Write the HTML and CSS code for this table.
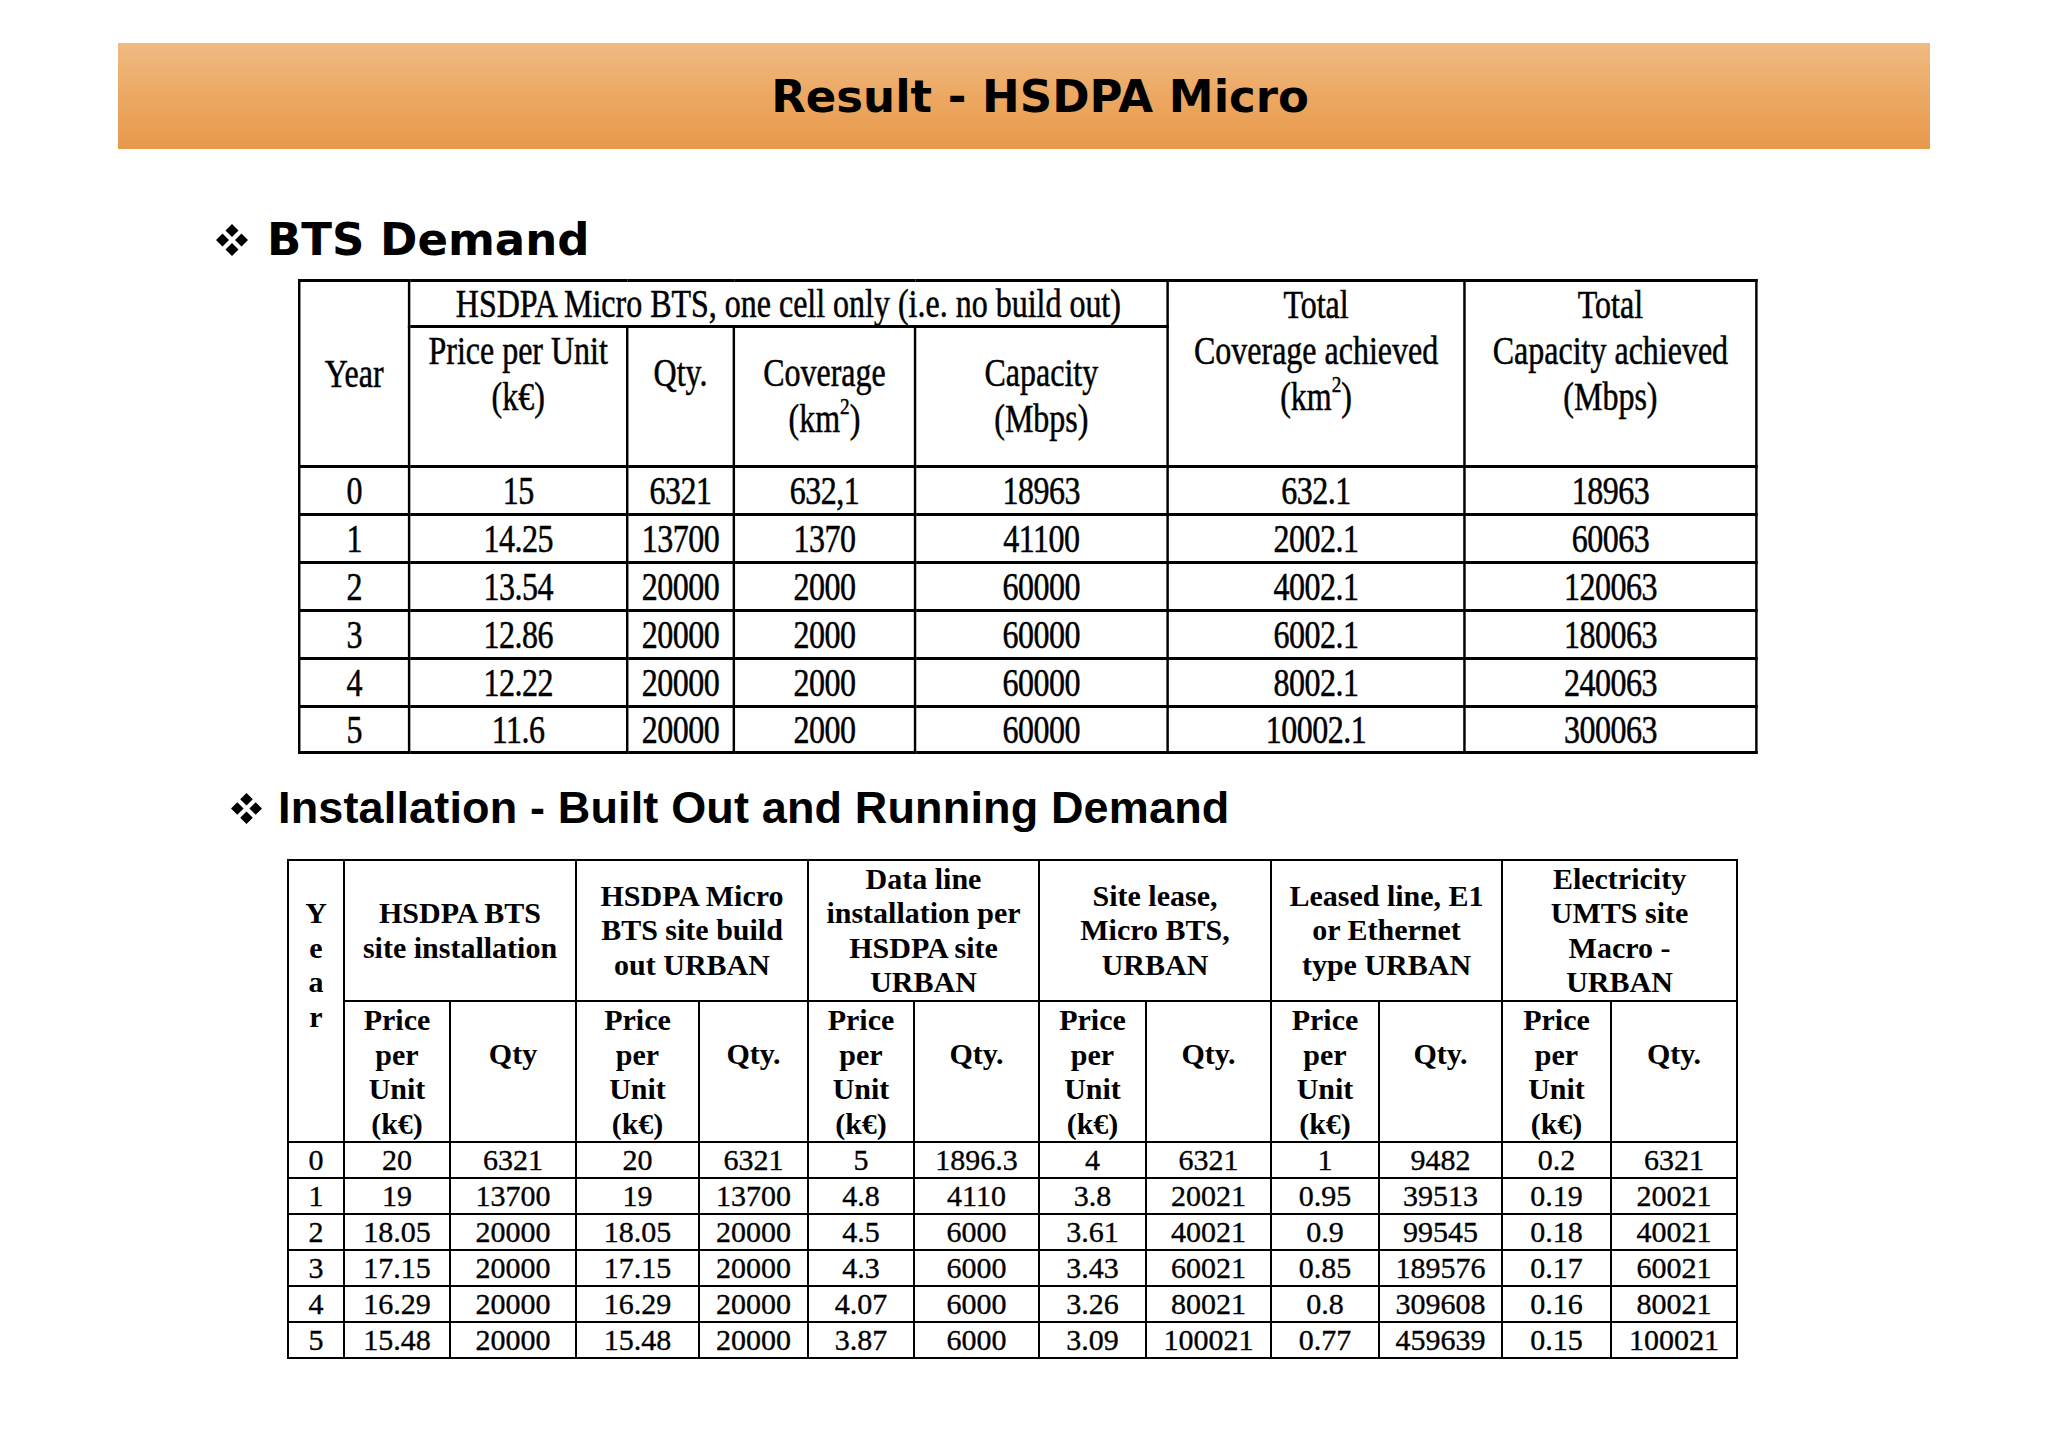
FILE: index.html
```html
<!DOCTYPE html>
<html lang="en">
<head>
<meta charset="utf-8">
<title>Result - HSDPA Micro</title>
<link rel="stylesheet" href="styles.css">
</head>
<body>
<header class="banner">
  <h1 class="banner-title">Result - HSDPA Micro</h1>
</header>

<h2 class="heading heading-bts">
  <svg class="bullet" viewBox="0 0 32 32" aria-hidden="true"><path d="M16 0L22.5 6.5L16 13L9.5 6.5Z M6.5 9.5L13 16L6.5 22.5L0 16Z M25.5 9.5L32 16L25.5 22.5L19 16Z M16 19L22.5 25.5L16 32L9.5 25.5Z"/></svg>
  <span>BTS Demand</span>
</h2>

<table class="bts">
  <colgroup>
    <col class="b-year"><col class="b-price"><col class="b-qty"><col class="b-cov"><col class="b-cap"><col class="b-tcov"><col class="b-tcap">
  </colgroup>
  <tr class="r-group">
    <td rowspan="2" class="mid">Year</td>
    <td colspan="4" class="mid tight">HSDPA Micro BTS, one cell only (i.e. no build out)</td>
    <td rowspan="2" class="top">Total<br>Coverage achieved<br>(km<sup>2</sup>)</td>
    <td rowspan="2" class="top">Total<br>Capacity achieved<br>(Mbps)</td>
  </tr>
  <tr class="r-sub">
    <td class="top">Price per Unit<br>(k€)</td>
    <td class="top pad">Qty.</td>
    <td class="top pad">Coverage<br>(km<sup>2</sup>)</td>
    <td class="top pad">Capacity<br>(Mbps)</td>
  </tr>
  <tr class="r-data"><td>0</td><td>15</td><td>6321</td><td>632,1</td><td>18963</td><td>632.1</td><td>18963</td></tr>
  <tr class="r-data"><td>1</td><td>14.25</td><td>13700</td><td>1370</td><td>41100</td><td>2002.1</td><td>60063</td></tr>
  <tr class="r-data"><td>2</td><td>13.54</td><td>20000</td><td>2000</td><td>60000</td><td>4002.1</td><td>120063</td></tr>
  <tr class="r-data"><td>3</td><td>12.86</td><td>20000</td><td>2000</td><td>60000</td><td>6002.1</td><td>180063</td></tr>
  <tr class="r-data"><td>4</td><td>12.22</td><td>20000</td><td>2000</td><td>60000</td><td>8002.1</td><td>240063</td></tr>
  <tr class="r-last"><td>5</td><td>11.6</td><td>20000</td><td>2000</td><td>60000</td><td>10002.1</td><td>300063</td></tr>
</table>

<h2 class="heading heading-install">
  <svg class="bullet" viewBox="0 0 32 32" aria-hidden="true"><path d="M16 0L22.5 6.5L16 13L9.5 6.5Z M6.5 9.5L13 16L6.5 22.5L0 16Z M25.5 9.5L32 16L25.5 22.5L19 16Z M16 19L22.5 25.5L16 32L9.5 25.5Z"/></svg>
  <span>Installation - Built Out and Running Demand</span>
</h2>

<table class="inst">
  <colgroup>
    <col class="i-year">
    <col class="i-c1"><col class="i-c2"><col class="i-c3"><col class="i-c4">
    <col class="i-c5"><col class="i-c6"><col class="i-c7"><col class="i-c8">
    <col class="i-c9"><col class="i-c10"><col class="i-c11"><col class="i-c12">
  </colgroup>
  <tr class="ir-group">
    <th rowspan="2" class="year-v">Y<br>e<br>a<br>r</th>
    <th colspan="2">HSDPA BTS<br>site installation</th>
    <th colspan="2">HSDPA Micro<br>BTS site build<br>out URBAN</th>
    <th colspan="2">Data line<br>installation per<br>HSDPA site<br>URBAN</th>
    <th colspan="2">Site lease,<br>Micro BTS,<br>URBAN</th>
    <th colspan="2">Leased line, E1<br>or Ethernet<br>type URBAN</th>
    <th colspan="2">Electricity<br>UMTS site<br>Macro -<br>URBAN</th>
  </tr>
  <tr class="ir-sub">
    <th class="price">Price<br>per<br>Unit<br>(k€)</th><th class="qty">Qty</th>
    <th class="price">Price<br>per<br>Unit<br>(k€)</th><th class="qty">Qty.</th>
    <th class="price">Price<br>per<br>Unit<br>(k€)</th><th class="qty">Qty.</th>
    <th class="price">Price<br>per<br>Unit<br>(k€)</th><th class="qty">Qty.</th>
    <th class="price">Price<br>per<br>Unit<br>(k€)</th><th class="qty">Qty.</th>
    <th class="price">Price<br>per<br>Unit<br>(k€)</th><th class="qty">Qty.</th>
  </tr>
  <tr class="ir-data"><td>0</td><td>20</td><td>6321</td><td>20</td><td>6321</td><td>5</td><td>1896.3</td><td>4</td><td>6321</td><td>1</td><td>9482</td><td>0.2</td><td>6321</td></tr>
  <tr class="ir-data"><td>1</td><td>19</td><td>13700</td><td>19</td><td>13700</td><td>4.8</td><td>4110</td><td>3.8</td><td>20021</td><td>0.95</td><td>39513</td><td>0.19</td><td>20021</td></tr>
  <tr class="ir-data"><td>2</td><td>18.05</td><td>20000</td><td>18.05</td><td>20000</td><td>4.5</td><td>6000</td><td>3.61</td><td>40021</td><td>0.9</td><td>99545</td><td>0.18</td><td>40021</td></tr>
  <tr class="ir-data"><td>3</td><td>17.15</td><td>20000</td><td>17.15</td><td>20000</td><td>4.3</td><td>6000</td><td>3.43</td><td>60021</td><td>0.85</td><td>189576</td><td>0.17</td><td>60021</td></tr>
  <tr class="ir-data"><td>4</td><td>16.29</td><td>20000</td><td>16.29</td><td>20000</td><td>4.07</td><td>6000</td><td>3.26</td><td>80021</td><td>0.8</td><td>309608</td><td>0.16</td><td>80021</td></tr>
  <tr class="ir-data"><td>5</td><td>15.48</td><td>20000</td><td>15.48</td><td>20000</td><td>3.87</td><td>6000</td><td>3.09</td><td>100021</td><td>0.77</td><td>459639</td><td>0.15</td><td>100021</td></tr>
</table>
</body>
</html>
```
FILE: styles.css
```css
html {
  overflow: hidden;
}

body {
  margin: 0;
  background: #ffffff;
  color: #000000;
}

/* ---------- banner ---------- */
.banner {
  margin: 43px 118px 0 118px;
  height: 106px;
  box-sizing: border-box;
  padding-left: 32px;
  display: flex;
  align-items: center;
  justify-content: center;
  background: linear-gradient(to bottom, #f0ba84 0%, #eca862 50%, #e8994a 100%);
}

.banner-title {
  margin: 0;
  font-family: "DejaVu Sans", Verdana, sans-serif;
  font-weight: bold;
  font-size: 45px;
  line-height: 1;
  color: #000;
}

/* ---------- section headings ---------- */
.heading {
  display: flex;
  align-items: center;
  margin: 0;
  height: 50px;
  line-height: 50px;
  font-weight: bold;
  white-space: nowrap;
}

.heading-bts {
  margin-top: 66px;
  padding-left: 216px;
  font-family: "DejaVu Sans", Verdana, sans-serif;
  font-size: 45px;
}

.heading-install {
  margin-top: 29px;
  padding-left: 231px;
  font-family: "Liberation Sans", Arial, sans-serif;
  font-size: 45px;
  letter-spacing: 0.15px;
}

.bullet {
  flex: none;
  width: 32px;
  height: 32px;
  fill: #000;
}

.heading-bts .bullet {
  margin-right: 19px;
}

.heading-install .bullet {
  width: 31px;
  height: 31px;
  margin-right: 16px;
}

/* ---------- BTS demand table (condensed serif) ---------- */
.bts {
  margin: 14px 0 0 298px;
  width: 1777px;
  border-collapse: collapse;
  table-layout: fixed;
  transform: scaleX(0.82);
  transform-origin: 0 0;
  font-family: "Liberation Serif", "Times New Roman", serif;
  font-size: 39px;
  line-height: 46px;
  -webkit-text-stroke: 0.5px #000;
}

.bts td {
  border: 3px solid #000;
  padding: 0;
  text-align: center;
  vertical-align: middle;
  white-space: nowrap;
}

.bts td.tight,
.bts .r-data td,
.bts .r-last td {
  line-height: 38px;
}

.bts .r-data td,
.bts .r-last td {
  letter-spacing: -0.6px;
}

.bts td.top {
  vertical-align: top;
}

.bts td.pad {
  padding-top: 22px;
}

.bts sup {
  font-size: 0.6em;
  line-height: 0;
  vertical-align: 0.75em;
}

.b-year { width: 134px; }
.b-price { width: 266px; }
.b-qty { width: 130px; }
.b-cov { width: 221px; }
.b-cap { width: 308px; }
.b-tcov { width: 362px; }
.b-tcap { width: 356px; }

.r-group { height: 46px; }
.r-sub { height: 140px; }
.r-data { height: 48px; }
.r-last { height: 46px; }

/* ---------- installation table ---------- */
.inst {
  margin: 26px 0 0 287px;
  width: 1449px;
  border-collapse: collapse;
  table-layout: fixed;
  font-family: "Liberation Serif", "Times New Roman", serif;
  font-size: 30px;
  line-height: 34.5px;
}

.inst th,
.inst td {
  border: 2px solid #000;
  padding: 0;
  text-align: center;
  vertical-align: middle;
  white-space: nowrap;
}

.inst th {
  font-weight: bold;
}

.inst td {
  font-weight: normal;
  line-height: 30px;
  -webkit-text-stroke: 0.35px #000;
}

.inst th.year-v {
  vertical-align: top;
  padding-top: 35px;
}

.inst th.price {
  vertical-align: top;
  padding-top: 1px;
}

.inst th.qty {
  vertical-align: top;
  padding-top: 35px;
}

.i-year { width: 56px; }
.i-c1 { width: 106px; }
.i-c2 { width: 126px; }
.i-c3 { width: 123px; }
.i-c4 { width: 109px; }
.i-c5 { width: 106px; }
.i-c6 { width: 125px; }
.i-c7 { width: 107px; }
.i-c8 { width: 125px; }
.i-c9 { width: 108px; }
.i-c10 { width: 123px; }
.i-c11 { width: 109px; }
.i-c12 { width: 126px; }

.ir-group { height: 141px; }
.ir-sub { height: 140px; }
.ir-data { height: 36px; }
```
